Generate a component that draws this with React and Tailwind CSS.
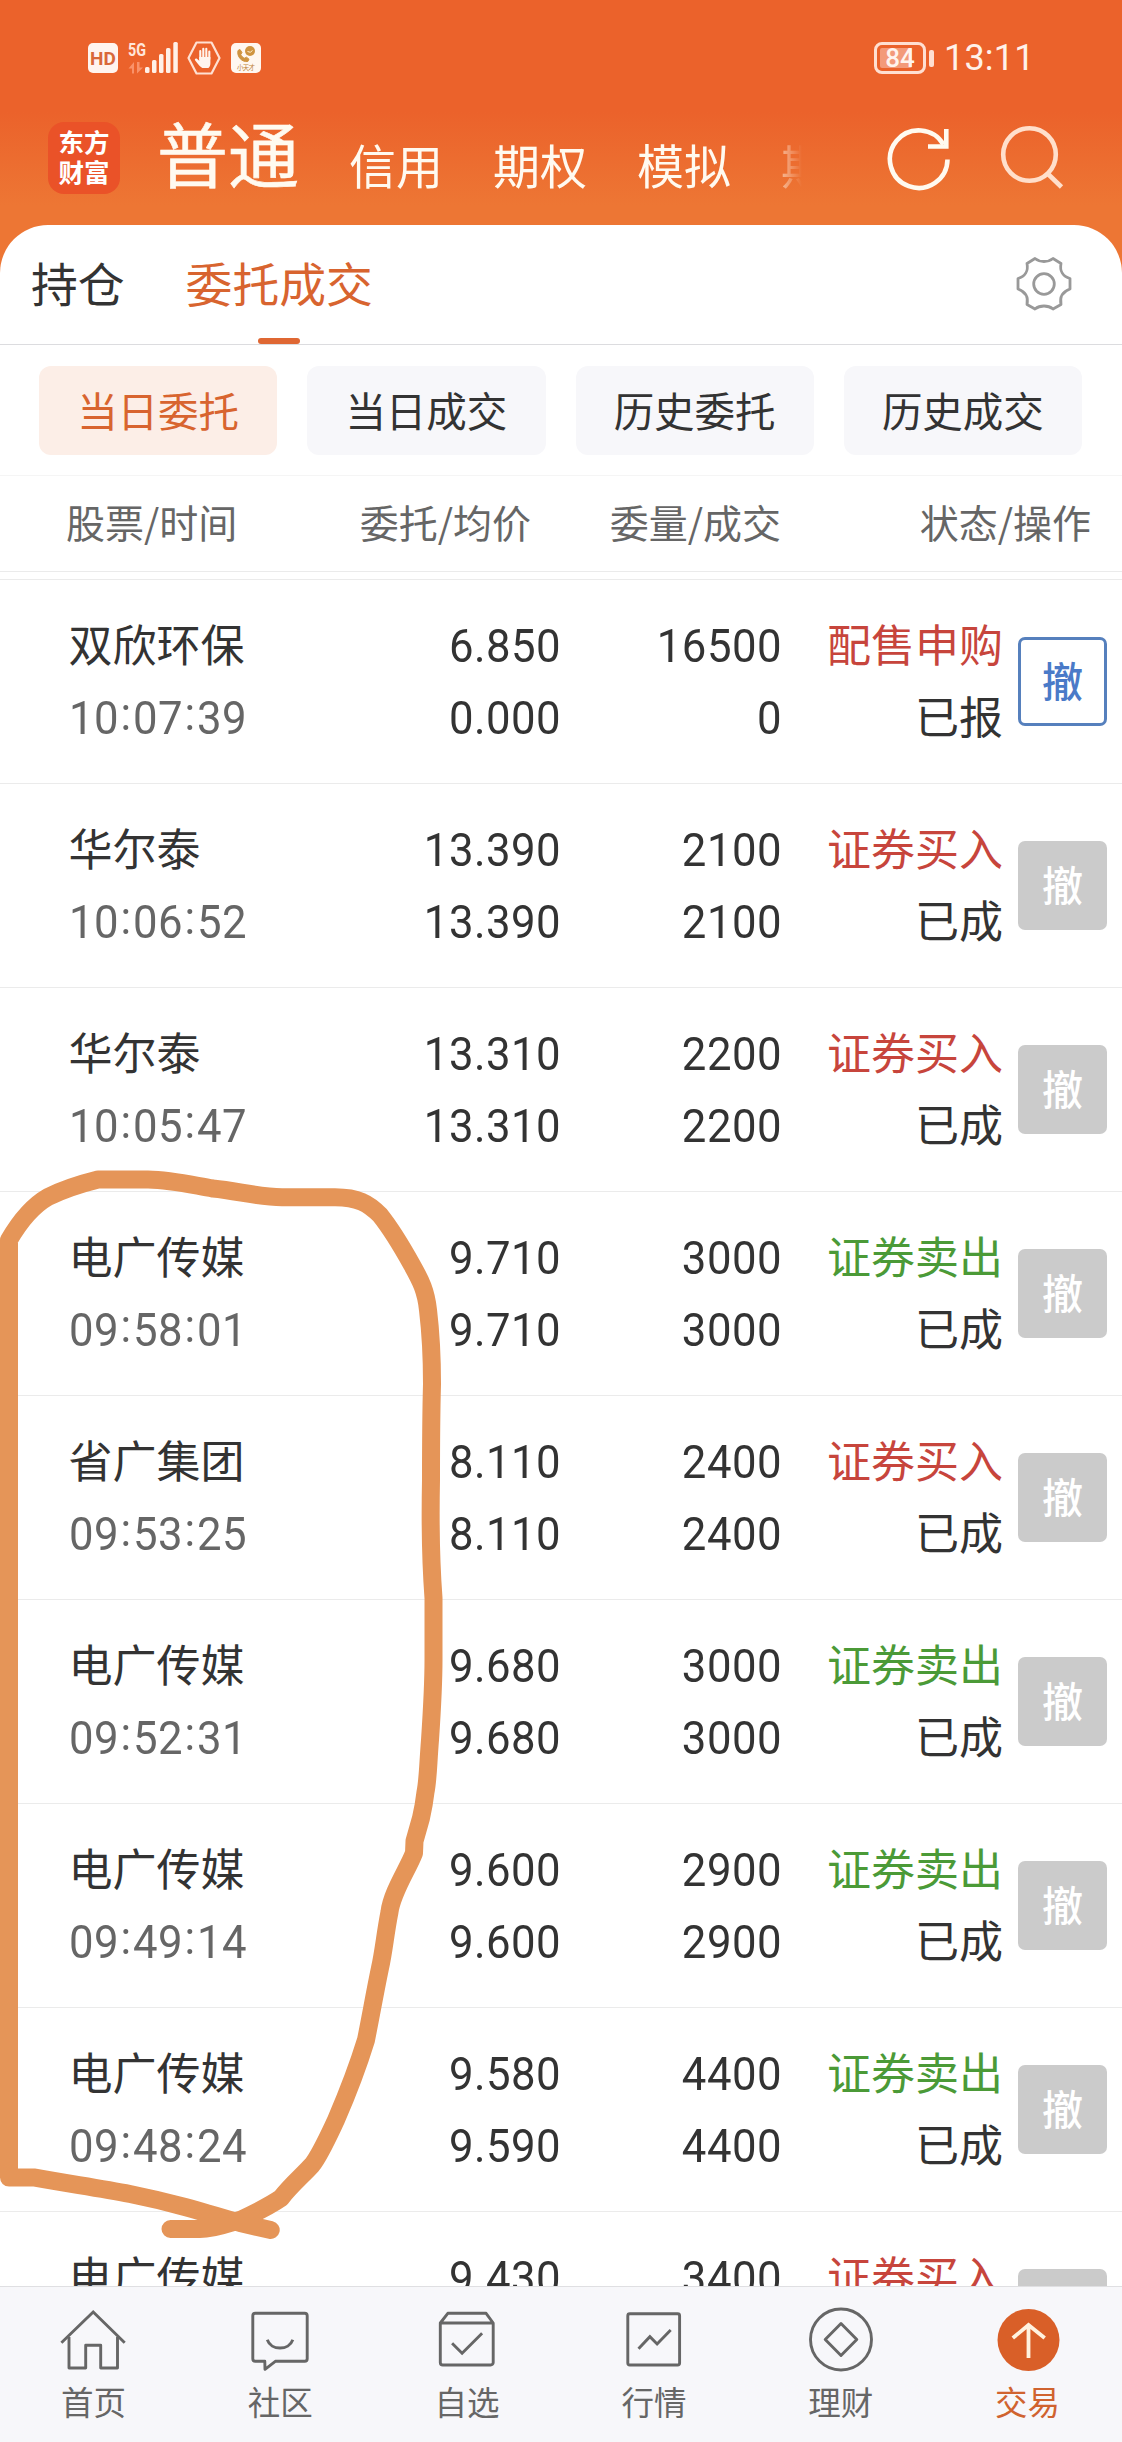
import React from "react";

const orders = [
  { name: "双欣环保", time: "10:07:39", price: ["6.850", "0.000"], qty: ["16500", "0"], side: "配售申购", tone: "red", state: "已报", active: true },
  { name: "华尔泰", time: "10:06:52", price: ["13.390", "13.390"], qty: ["2100", "2100"], side: "证券买入", tone: "red", state: "已成" },
  { name: "华尔泰", time: "10:05:47", price: ["13.310", "13.310"], qty: ["2200", "2200"], side: "证券买入", tone: "red", state: "已成" },
  { name: "电广传媒", time: "09:58:01", price: ["9.710", "9.710"], qty: ["3000", "3000"], side: "证券卖出", tone: "green", state: "已成" },
  { name: "省广集团", time: "09:53:25", price: ["8.110", "8.110"], qty: ["2400", "2400"], side: "证券买入", tone: "red", state: "已成" },
  { name: "电广传媒", time: "09:52:31", price: ["9.680", "9.680"], qty: ["3000", "3000"], side: "证券卖出", tone: "green", state: "已成" },
  { name: "电广传媒", time: "09:49:14", price: ["9.600", "9.600"], qty: ["2900", "2900"], side: "证券卖出", tone: "green", state: "已成" },
  { name: "电广传媒", time: "09:48:24", price: ["9.580", "9.590"], qty: ["4400", "4400"], side: "证券卖出", tone: "green", state: "已成" },
  { name: "电广传媒", price: ["9.430"], qty: ["3400"], side: "证券买入", tone: "red" },
];

const numCls = "block h-[72px] scale-x-[0.93] whitespace-nowrap font-['Roboto',sans-serif] text-[47px] leading-[72px] tracking-[0.5px]";

function StatusBar() {
  return (
    <div className="flex h-[74px] items-end justify-between pl-[88px] pr-[92px] pt-[42px]">
      <div className="flex h-8 items-center">
        <div className="flex h-[30px] w-[30px] items-center justify-center rounded-[5px] bg-[#fff4ef] font-['Roboto',sans-serif] text-[19px] font-bold leading-none text-[#d9683a]">
          HD
        </div>
        <svg className="ml-2 h-[34px] w-[54px]" viewBox="126 41 54 34">
          <text x="128" y="56" fontFamily="Roboto, sans-serif" fontSize="18" fontWeight="700" textLength="18" lengthAdjust="spacingAndGlyphs" fill="#ffe6db">5G</text>
          <path d="M134 73.500V62L128.500 68.500H132V73.500ZM137 62V73.500L143 67.500H139.500V62Z" fill="#f9926a" />
          <g fill="#fff0e8">
            <rect x="145" y="67" width="4.500" height="6" rx="1.500" />
            <rect x="152" y="60" width="4.500" height="13" rx="1.500" />
            <rect x="159" y="54" width="4.500" height="19" rx="1.500" />
            <rect x="166" y="48" width="4.500" height="25" rx="1.500" />
            <rect x="173.300" y="42" width="4.500" height="31" rx="1.500" />
          </g>
        </svg>
        <svg className="ml-[7px] h-[34px] w-[34px]" viewBox="0 0 34 34">
          <path d="M9.500 1.500h15L32.500 17l-8 15.500h-15L1.500 17z" fill="none" stroke="#ffe0d2" strokeWidth="2.200" strokeLinejoin="round" />
          <path d="M13.300 18V10M16.300 18V7.800M19.300 18V7.800M22.300 18V10.500" stroke="#fff4ee" strokeWidth="2.100" strokeLinecap="round" />
          <path d="M12.200 16h11.200v6.500c0 2-1 4-2 4.500h-6c-2-1-4-3.500-7.200-7.500-1-1.500.6-2.600 2-1.500l2 1.700z" fill="#fff4ee" />
        </svg>
        <svg className="ml-[10px] h-[30px] w-[30px]" viewBox="0 0 30 30">
          <rect width="30" height="30" rx="5" fill="#fff7f0" />
          <circle cx="19" cy="8" r="5" fill="#cf9440" />
          <path d="M16.500 8.500q3 2 5-1" stroke="#fff0d0" strokeWidth="1" fill="none" />
          <path d="M7 7.500L9 6.500L11 9.500L9.800 11.500C10.500 13.200 11.800 14.500 13.500 15.200L15.500 14.200L18 16.200L16.800 18.500C11 19.500 5.500 13.500 7 7.500Z" fill="#cf9440" stroke="#cf9440" strokeLinejoin="round" />
          <text x="6" y="26.500" fontFamily="'Noto Sans CJK SC', sans-serif" fontSize="6.500" textLength="18" fill="#bd8238">小天才</text>
        </svg>
      </div>
      <div className="flex h-8 items-center">
        <div className="relative flex h-8 w-[52px] items-center justify-center rounded-lg border-[3px] border-[#ffdfd1]">
          <div className="absolute bottom-[3px] left-[3px] top-[3px] w-8 rounded-[2px] bg-[#f39a7a]" />
          <span className="relative font-['Roboto',sans-serif] text-[26px] font-medium leading-none text-[#fff4ee]">84</span>
        </div>
        <div className="ml-[3px] h-[17px] w-[5px] rounded-[2px] bg-[#ffdfd1]" />
        <span className="ml-[10px] w-[86px] whitespace-nowrap font-['Roboto',sans-serif] text-[36px] leading-8 tracking-[0.2px] text-[#fff1e9]">13:11</span>
      </div>
    </div>
  );
}

function Header() {
  return (
    <div className="flex h-[151px] items-start">
      <div className="ml-12 mt-[48px] flex h-[72px] w-[72px] flex-col items-center justify-center rounded-2xl bg-[#ea5228] text-[25.5px] font-bold leading-[30px] text-white">
        <span className="-mt-1">东方</span>
        <span>财富</span>
      </div>
      <div className="ml-[37px] mt-[26.500px] h-[100px] text-[71px] leading-[100px] text-[#fffaf0] [-webkit-text-stroke:0.6px_#fffaf0]">普通</div>
      <div className="ml-[50px] mt-[50px] flex h-20 w-[453px] gap-[50px] overflow-hidden whitespace-nowrap text-[47px] leading-[80px] text-[#fffaf0] [mask-image:linear-gradient(to_right,#000_85%,rgba(0,0,0,.45)_96%,transparent_100%)]">
        <span>信用</span>
        <span>期权</span>
        <span>模拟</span>
        <span>期货</span>
      </div>
      <svg className="ml-[84px] mt-[49px] h-[70px] w-[66px]" viewBox="886 123 66 70" fill="none" stroke="#fffaf0" strokeWidth="4.600">
        <path d="M947.500 159.500A28.800 28.800 0 1 1 943.500 144.500" />
        <path d="M928 146.500H946.300V129" />
      </svg>
      <svg className="ml-[45px] mt-[49px] h-[70px] w-[70px]" viewBox="997 123 70 70" fill="none" stroke="#ffdfcb" strokeWidth="4.600">
        <circle cx="1029.500" cy="154.500" r="26.300" />
        <path d="M1047.500 173.500L1061.500 187" />
      </svg>
    </div>
  );
}

function Chip({ active, children }) {
  return (
    <div className={"flex h-[89px] flex-1 items-center justify-center rounded-xl pb-[1px] text-[40.5px] " + (active ? "bg-[#fceee7] text-[#d8642f]" : "bg-[#f7f7fa] text-[#333]")}>
      {children}
    </div>
  );
}

function Time({ value }) {
  const parts = value.split(":");
  return (
    <span className={numCls + " origin-left text-[#666]"}>
      {parts.map((p, i) => (
        <React.Fragment key={i}>
          {i > 0 && <span className="inline-block w-[15px] -translate-y-1 text-center">:</span>}
          {p}
        </React.Fragment>
      ))}
    </span>
  );
}

function Numbers({ values }) {
  return values.map((v, i) => (
    <span key={i} className={numCls + " origin-right"}>{v}</span>
  ));
}

function OrderRow({ o }) {
  return (
    <div className="flex h-[204px] shrink-0 border-b border-[#ebebeb] pt-[30px] text-[#333]">
      <div className="w-[320px] pl-[68.500px]">
        <div className="-mt-[3px] mb-[3px] h-[72px] text-[44px] leading-[72px]">{o.name}</div>
        {o.time && <Time value={o.time} />}
      </div>
      <div className="w-[241px] text-right">
        <Numbers values={o.price} />
      </div>
      <div className="w-[221px] text-right">
        <Numbers values={o.qty} />
      </div>
      <div className="-mt-[3px] w-[221px] text-right text-[44px] leading-[72px]">
        <div className={o.tone === "red" ? "text-[#c7453c]" : "text-[#4b9a37]"}>{o.side}</div>
        <div>{o.state}</div>
      </div>
      <div className={"ml-[15px] mt-[27px] flex h-[89px] w-[89px] items-center justify-center rounded-[7px] pb-[3px] text-[41px] font-medium " + (o.active ? "border-[3px] border-[#5680bd] bg-white text-[#4a7ac8]" : "bg-[#cbcbcb] text-white")}>
        撤
      </div>
    </div>
  );
}

const navItems = [
  { label: "首页", icon: <><path d="M4.400 38.700L36.200 8L67.700 38.700" /><path d="M12 33V64H28.700V41.300H43.700V64H60.500V33" strokeLinejoin="round" /></> },
  { label: "社区", icon: <><path d="M11.300 9.300H60.700a2.500 2.500 0 0 1 2.500 2.500V54.800a2.500 2.500 0 0 1-2.500 2.500H31.300L21 65.300L20.800 57.300H11.300a2.500 2.500 0 0 1-2.500-2.500V11.800a2.500 2.500 0 0 1 2.500-2.500Z" strokeLinejoin="round" /><path d="M23.300 35.700C27 46.800 45 46.800 48.800 35.700" /></> },
  { label: "自选", icon: <><path d="M9.300 19V58.500a2.500 2.500 0 0 0 2.500 2.500H59.700a2.500 2.500 0 0 0 2.500-2.500V19L55.100 9.300H16.800ZM9.300 19H62.200" strokeLinejoin="round" /><path d="M21.100 39.300L31.100 49.300L51.100 29.300" /></> },
  { label: "行情", icon: <><rect x="9.800" y="9.700" width="51.800" height="51.300" rx="2" /><path d="M20.500 44.700L31.900 32.700L39.100 40L52.700 26" /></> },
  { label: "理财", icon: <><circle cx="36" cy="35.500" r="30.500" /><path d="M36 19.500L51.800 35.500L36 51.500L20.200 35.500Z" strokeLinejoin="round" /></> },
  { label: "交易", active: true, icon: <><circle cx="36.500" cy="36" r="31" fill="#d95f28" stroke="none" /><path d="M36.500 54V21M20.800 34L36.500 21L52.700 34" stroke="#fff2df" strokeWidth="3.800" /></> },
];

function Nav() {
  return (
    <div className="flex h-[156px] shrink-0 border-t border-[#dfdfe2] bg-[#f7f7fa] pr-[1px]">
      {navItems.map((n) => (
        <div key={n.label} className="flex flex-1 flex-col items-center pt-[17px]">
          <svg className="h-[72px] w-[72px]" viewBox="0 0 72 72" fill="none" stroke="#666" strokeWidth="2.900">
            {n.icon}
          </svg>
          <span className={"mt-[2px] text-[32.5px] leading-[46px] " + (n.active ? "text-[#d0632f]" : "text-[#666]")}>{n.label}</span>
        </div>
      ))}
    </div>
  );
}

function HandDrawnLoop() {
  return (
    <svg className="pointer-events-none absolute left-0 top-0 h-[2442px] w-[1122px]" viewBox="0 0 1122 2442" fill="none" stroke="#e59558" strokeWidth="18" strokeLinecap="round" strokeLinejoin="round">
      <path d="M270.700 2230L240 2223C200 2211 170 2202 130 2194C100 2188 70 2184 35 2177.600H9V1240C20 1221 34 1205 48 1197C62 1190 80 1184 98 1179.500H148C172 1180 192 1185 213 1188.500C238 1191 258 1197 282 1197.300H335C358 1197.500 368 1203 380 1215C392 1230 402 1247 412 1265C421 1281 426 1291 428 1310C431 1335 432 1360 432 1384C431 1420 431 1450 431 1480C430 1530 431 1565 433.500 1598V1660C433.500 1680 432 1710 430 1740C428 1765 428 1780 425.500 1792Q424 1805 421 1818L414.500 1841L414 1853C408 1869 392 1892 389.500 1912C385 1935 384 1950 380 1968C375 1992 371 2015 366 2040C358 2066 349 2090 336 2120C328 2137 320 2155 312 2165C304 2174 290 2186 281 2198C268 2207 255 2213 240 2220C226 2224 215 2229 200 2229H170.500" />
    </svg>
  );
}

export default function App() {
  return (
    <div className="relative flex h-[2442px] w-[1122px] flex-col overflow-hidden bg-[linear-gradient(to_bottom,#eb622b_0px,#eb622b_112px,#ed7634_205px,#ed7634_300px)] font-['Noto_Sans_CJK_SC',sans-serif]">
      <StatusBar />
      <Header />
      <div className="flex min-h-0 flex-1 flex-col overflow-hidden rounded-t-[48px] bg-white">
        <div className="flex h-[120px] shrink-0 items-start border-b border-[#dcdcdf] pl-[31px] text-[46.8px] leading-[66px]">
          <span className="mt-[24px] text-[#333]">持仓</span>
          <div className="ml-[61px] flex h-full flex-col items-center justify-between pt-[24px] text-[#d8642f]">
            <span>委托成交</span>
            <div className="h-[6px] w-[42px] rounded-full bg-[#df6733]" />
          </div>
          <svg className="ml-auto mr-[50px] mt-[31px] h-14 w-14" viewBox="-28 -28 56 56" fill="none" stroke="#999" strokeWidth="2.800" strokeLinejoin="round">
            <path d="M-9 -25.500C-4 -21.500 4 -21.500 9 -25.500L17 -20.500C15.500 -13 19 -7.500 26 -5.500V5C19 7.500 15.500 13 17 20.500L9 25C4 21 -4 21 -9 25L-17 20.500C-15.500 13 -19 7.500 -26 5V-5.500C-19 -7.500 -15.500 -13 -17 -20.500Z" />
            <circle r="10.300" />
          </svg>
        </div>
        <div className="flex h-[131px] shrink-0 gap-[30px] border-b border-[#f5f5f5] pl-[39px] pr-[40px] pt-[21px]">
          <Chip active>当日委托</Chip>
          <Chip>当日成交</Chip>
          <Chip>历史委托</Chip>
          <Chip>历史成交</Chip>
        </div>
        <div className="flex h-24 shrink-0 border-b border-[#ebebeb] pt-[11px] text-[39px] leading-[68px] text-[#666]">
          <span className="w-[293px] pl-[66px]">股票/时间</span>
          <span className="w-[238px] text-right">委托/均价</span>
          <span className="w-[250px] text-right">委量/成交</span>
          <span className="w-[310px] text-right">状态/操作</span>
        </div>
        <div className="h-2 shrink-0 border-b border-[#ebebeb]" />
        <div className="flex min-h-0 flex-1 flex-col overflow-hidden">
          {orders.map((o, i) => (
            <OrderRow key={i} o={o} />
          ))}
        </div>
        <Nav />
      </div>
      <HandDrawnLoop />
    </div>
  );
}
